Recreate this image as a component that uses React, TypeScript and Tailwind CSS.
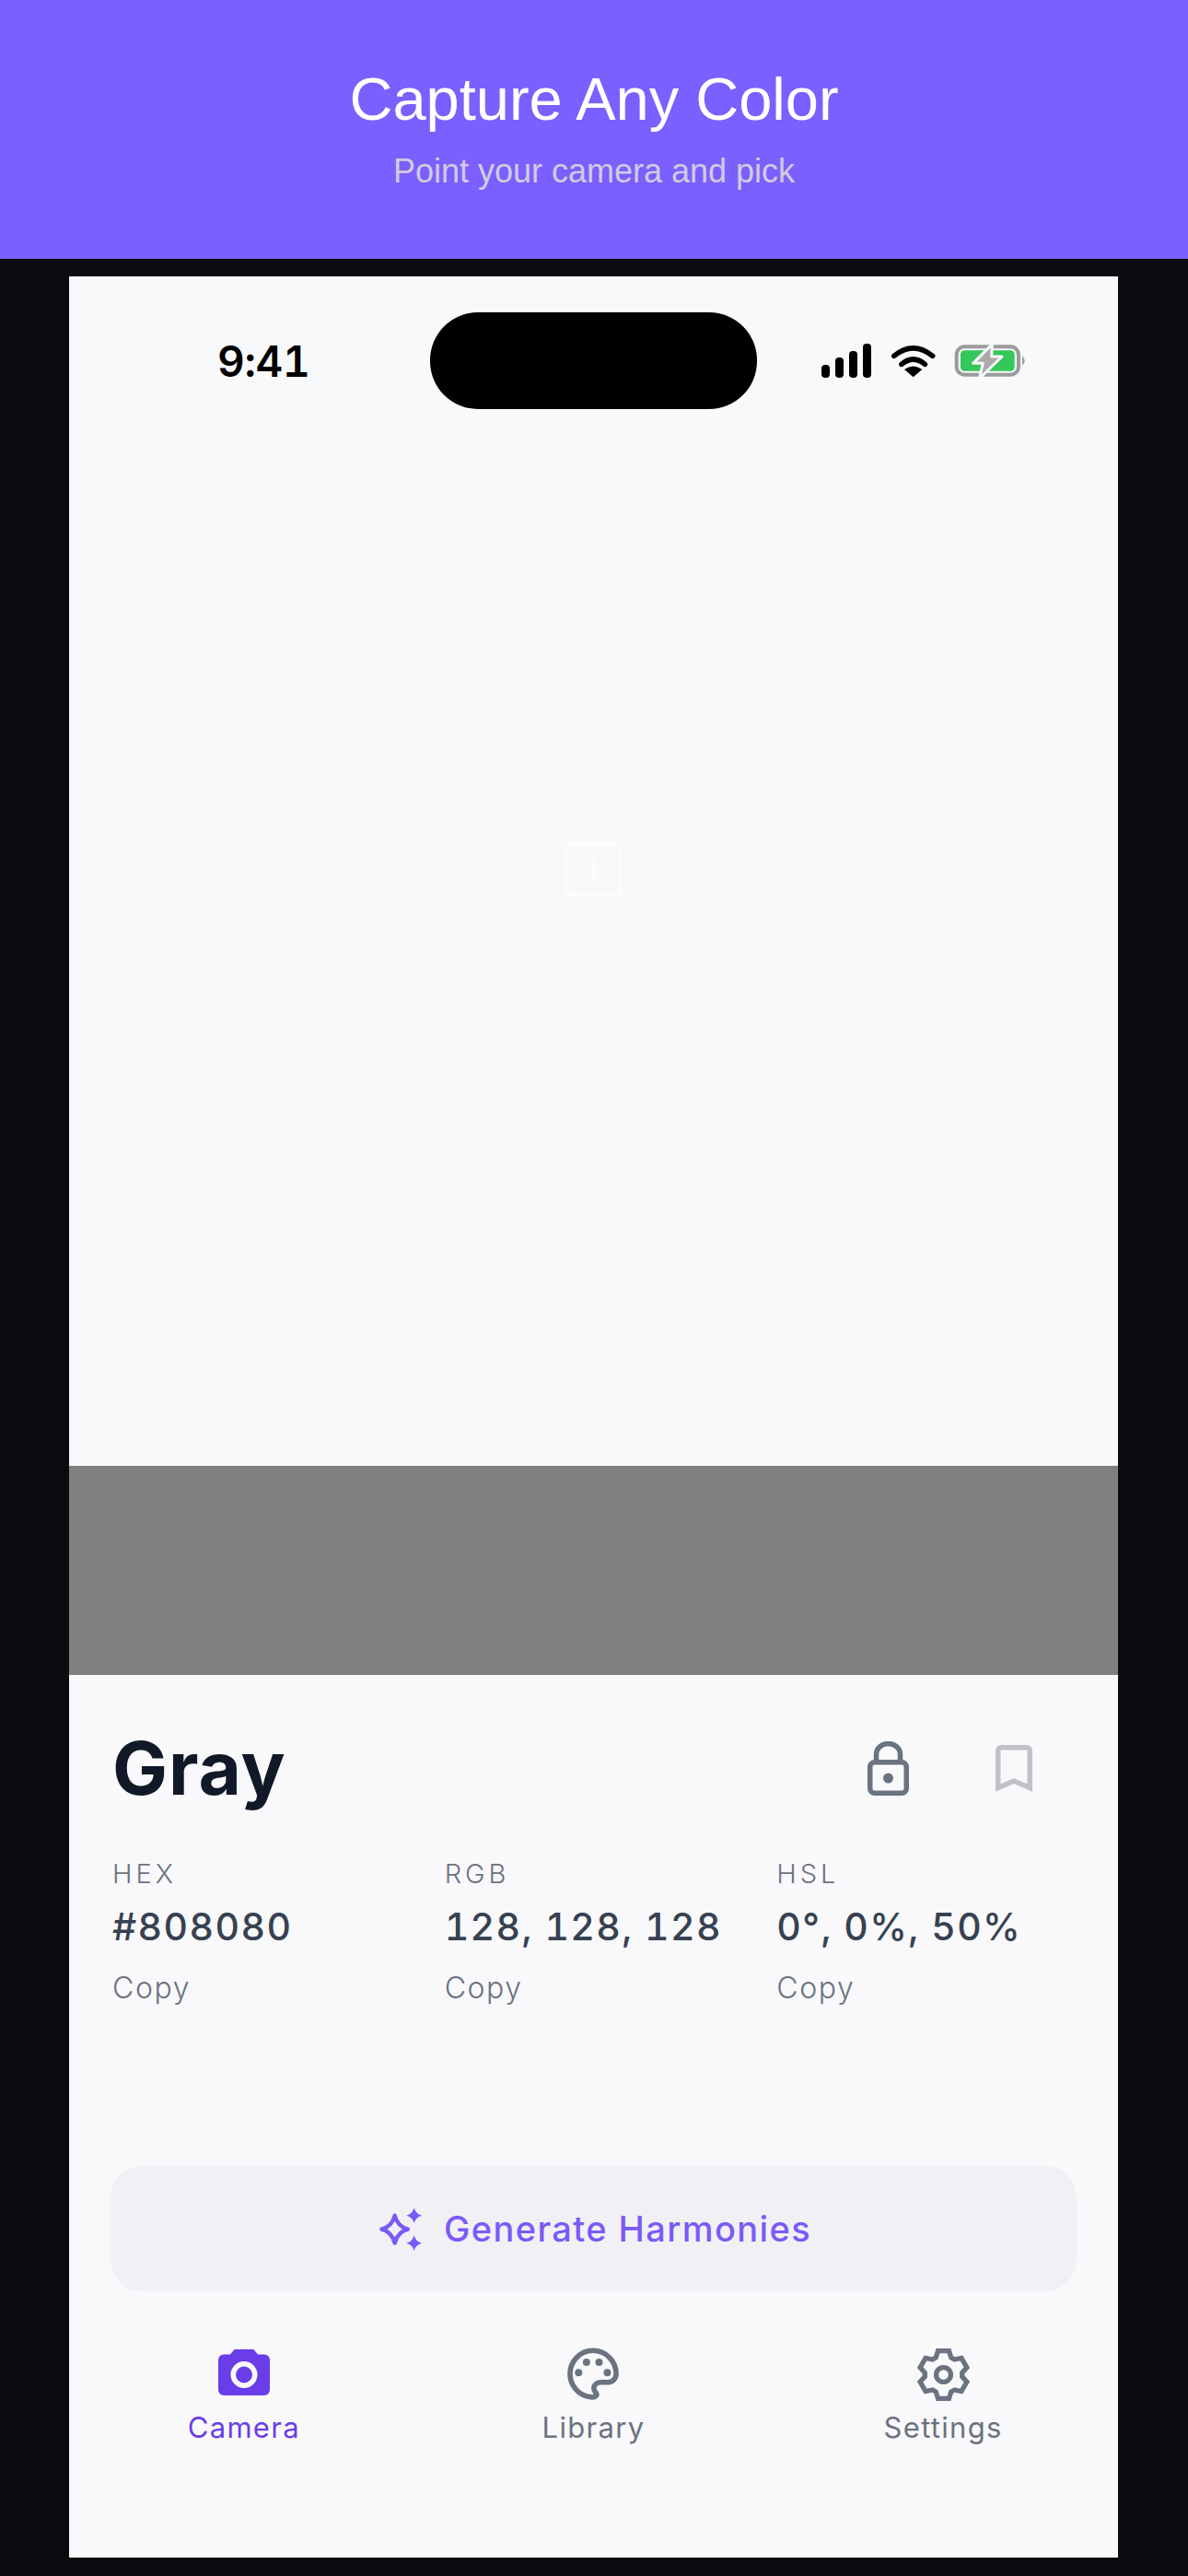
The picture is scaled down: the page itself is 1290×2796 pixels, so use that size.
const gearPoints = () => {
  // six teeth around the centre, drawn in zoom units
  const cx = 222;
  const cy = 142;
  const pts: string[] = [];
  for (let i = 0; i < 6; i++) {
    const a = (Math.PI / 3) * i - Math.PI / 2;
    const ux = Math.cos(a);
    const uy = Math.sin(a);
    const px = -uy;
    const py = ux;
    pts.push(`${cx + ux * 56 - px * 25},${cy + uy * 56 - py * 25}`);
    pts.push(`${cx + ux * 78 - px * 18},${cy + uy * 78 - py * 18}`);
    pts.push(`${cx + ux * 78 + px * 18},${cy + uy * 78 + py * 18}`);
    pts.push(`${cx + ux * 56 + px * 25},${cy + uy * 56 + py * 25}`);
  }
  return pts.join(" ");
};

function StatusBar() {
  return (
    <div className="absolute inset-x-0 top-[39px] flex h-[105px] items-center">
      <div className="w-[392px] pl-[161px]">
        <span className="font-['Inter',sans-serif] text-[46px] leading-none font-semibold tracking-[-0.3px] tabular-nums text-black">9:41</span>
      </div>
      <div className="h-[105px] w-[355px] rounded-[52px] bg-black" />
      <div className="flex items-center pl-[70px]">
        <svg width="56" height="38" viewBox="0 0 56 38" fill="#000">
          <rect x="0" y="23" width="9" height="14" rx="4" />
          <rect x="15" y="15" width="9" height="22" rx="4" />
          <rect x="30" y="8" width="9" height="29" rx="4" />
          <rect x="45" y="0" width="9" height="37" rx="4" />
        </svg>
        <svg className="ml-[20px]" width="48" height="36" viewBox="325 72 142 108">
          <path d="M332 109Q395 58 458 109" fill="none" stroke="#000" strokeWidth="17" strokeLinecap="round" />
          <path d="M357 136Q395 104 433 136" fill="none" stroke="#000" strokeWidth="17" strokeLinecap="round" />
          <path d="M395 178L366 153Q395 132 424 153Z" fill="#000" />
        </svg>
        <svg className="ml-[19px]" width="80" height="40" viewBox="525 65 240 120">
          <rect x="536" y="78" width="202" height="91" rx="26" fill="none" stroke="#9b9b9b" strokeWidth="12" />
          <rect x="549" y="90" width="176" height="67" rx="13" fill="#34c759" />
          <path d="M750 108Q766 124 750 140Z" fill="#9b9b9b" />
          <path d="M652 70L590 132H622L610 182L684 110H650Z" fill="#aaaaaa" stroke="#f8f9fa" strokeWidth="9" strokeLinejoin="round" />
        </svg>
      </div>
    </div>
  );
}

function ValueColumn({ label, value }: { label: string; value: string }) {
  return (
    <div className="flex flex-col">
      <span className="text-[29px] leading-[36px] font-light tracking-[4px] text-[#6b7280]">{label}</span>
      <span className="mt-[14px] text-[41px] leading-[50px] font-[450] tracking-[1.4px] tabular-nums whitespace-nowrap text-[#374151]">{value}</span>
      <span className="mt-[22px] text-[32px] leading-[40px] font-light tracking-[1.6px] text-[#6b7280]">Copy</span>
    </div>
  );
}

function LockIcon() {
  return (
    <svg width="45" height="59" viewBox="0 0 45 59" fill="none" stroke="#6b7280" strokeWidth="5.5">
      <path d="M9.5 22V14A13 11.5 0 0 1 35.5 14V22" />
      <rect x="2.75" y="22.75" width="39.5" height="33.5" rx="5" />
      <circle cx="22.5" cy="40" r="5.5" fill="#6b7280" stroke="none" />
    </svg>
  );
}

function BookmarkIcon() {
  return (
    <svg width="40" height="51" viewBox="0 0 40 51" fill="none" stroke="#c0c2c8" strokeWidth="5.5">
      <path d="M2.75 46.5V6A3.25 3.25 0 0 1 6 2.75H34A3.25 3.25 0 0 1 37.25 6V46.5L20 39Z" />
    </svg>
  );
}

function SparklesIcon() {
  return (
    <svg width="50" height="50" viewBox="60 40 150 150">
      <path d="M113 72Q122 108 156 117Q122 126 113 162Q104 126 70 117Q104 108 113 72Z" fill="none" stroke="#7a5af8" strokeWidth="13" strokeLinejoin="round" />
      <path d="M176 47Q181 67 201 72Q181 77 176 97Q171 77 151 72Q171 67 176 47Z" fill="#7a5af8" />
      <path d="M176 137Q181 157 201 162Q181 167 176 187Q171 167 151 162Q171 157 176 137Z" fill="#7a5af8" />
    </svg>
  );
}

function CameraIcon() {
  return (
    <svg width="60" height="56" viewBox="0 3 60 56">
      <path
        fillRule="evenodd"
        fill="#6a3de8"
        d="M20 2.5H40L45 8.5H52A6 6 0 0 1 58 14.5V47A6 6 0 0 1 52 53H8A6 6 0 0 1 2 47V14.5A6 6 0 0 1 8 8.5H15ZM30 16A14.5 14.5 0 1 0 30 45A14.5 14.5 0 1 0 30 16ZM30 21.5A9 9 0 1 1 30 39.5A9 9 0 1 1 30 21.5Z"
      />
    </svg>
  );
}

function PaletteIcon() {
  return (
    <svg width="63" height="63" viewBox="130 50 190 190" fill="none" stroke="#6b7280" strokeWidth="17" strokeLinecap="round" strokeLinejoin="round">
      <path d="M216 218C178 214 148 182 148 142C148 100 182 66 223 66C265 66 299 100 299 142C299 158 288 170 270 170H250C236 170 226 178 226 190C226 198 232 202 235 208C237 214 228 220 216 218Z" />
      <circle cx="202" cy="104" r="12" fill="#6b7280" stroke="none" />
      <circle cx="243" cy="104" r="12" fill="#6b7280" stroke="none" />
      <circle cx="176" cy="138" r="12" fill="#6b7280" stroke="none" />
      <circle cx="270" cy="138" r="12" fill="#6b7280" stroke="none" />
    </svg>
  );
}

function GearIcon() {
  return (
    <svg width="63" height="63" viewBox="127 47 190 190" fill="none" stroke="#6b7280" strokeWidth="16" strokeLinejoin="miter">
      <polygon points={gearPoints()} />
      <circle cx="222" cy="142" r="24" />
    </svg>
  );
}

function NavItem({ icon, label, active }: { icon: React.ReactNode; label: string; active?: boolean }) {
  return (
    <div className="flex flex-col items-center">
      <div className="flex h-[63px] items-center justify-center">{icon}</div>
      <span className={`mt-[6px] text-[31px] leading-[40px] tracking-[1.3px] ${active ? "text-[#6a3de8]" : "text-[#6b7280]"}`}>
        {label}
      </span>
    </div>
  );
}

export default function App() {
  return (
    <div className="flex min-h-[2796px] w-[1290px] flex-col bg-[#0a0a0f] font-['Inter',sans-serif]">
      <header className="flex h-[281px] flex-col items-center justify-center bg-[#7c5fff] pb-[3px] font-['Liberation_Sans',sans-serif]">
        <h1 className="text-[65px] leading-[74px] font-normal text-white">Capture Any Color</h1>
        <p className="mt-[19px] text-[36px] leading-[44px] text-[#d0cce0]">Point your camera and pick</p>
      </header>

      <main className="mt-[19px] ml-[75px] flex h-[2476px] w-[1139px] flex-col bg-[#f8f9fa]">
        {/* Camera view */}
        <div className="relative flex h-[1291px] items-center justify-center bg-[#f8f9fb] pb-[4px]">
          <StatusBar />
          <div className="relative flex h-[59px] w-[59px] items-center justify-center border-[3px] border-white/50">
            <div className="absolute h-[28px] w-[3px] bg-white/50" />
            <div className="absolute h-[3px] w-[28px] bg-white/50" />
          </div>
        </div>

        {/* Current colour */}
        <div className="h-[227px] bg-[#808080]" />

        <section className="flex flex-1 flex-col bg-[#f9f9fb]">
          <div className="px-[47px] pt-[61px]">
            <div className="flex h-[80px] items-center justify-between">
              <h2 className="text-[80px] leading-none font-bold tracking-[1px] text-[#111827]">Gray</h2>
              <div className="flex items-center gap-[94px] pr-[46px]">
                <LockIcon />
                <BookmarkIcon />
              </div>
            </div>
            <div className="mt-[57px] grid grid-cols-3 gap-[37px]">
              <ValueColumn label="HEX" value="#808080" />
              <ValueColumn label="RGB" value="128, 128, 128" />
              <ValueColumn label="HSL" value="0°, 0%, 50%" />
            </div>
          </div>

          <div className="mx-[45px] mt-[173px] flex h-[136px] items-center justify-center gap-[21px] rounded-[34px] bg-[#f1f1f5] pl-[3px]">
            <SparklesIcon />
            <span className="text-[38px] leading-none font-[450] tracking-[1.4px] text-[#7a5af8]">Generate Harmonies</span>
          </div>

          <nav className="mt-[33px] grid grid-cols-3 border-t border-[#f4f4f7] pt-[25px]">
            <NavItem icon={<CameraIcon />} label="Camera" active />
            <NavItem icon={<PaletteIcon />} label="Library" />
            <NavItem icon={<GearIcon />} label="Settings" />
          </nav>
        </section>
      </main>
    </div>
  );
}
